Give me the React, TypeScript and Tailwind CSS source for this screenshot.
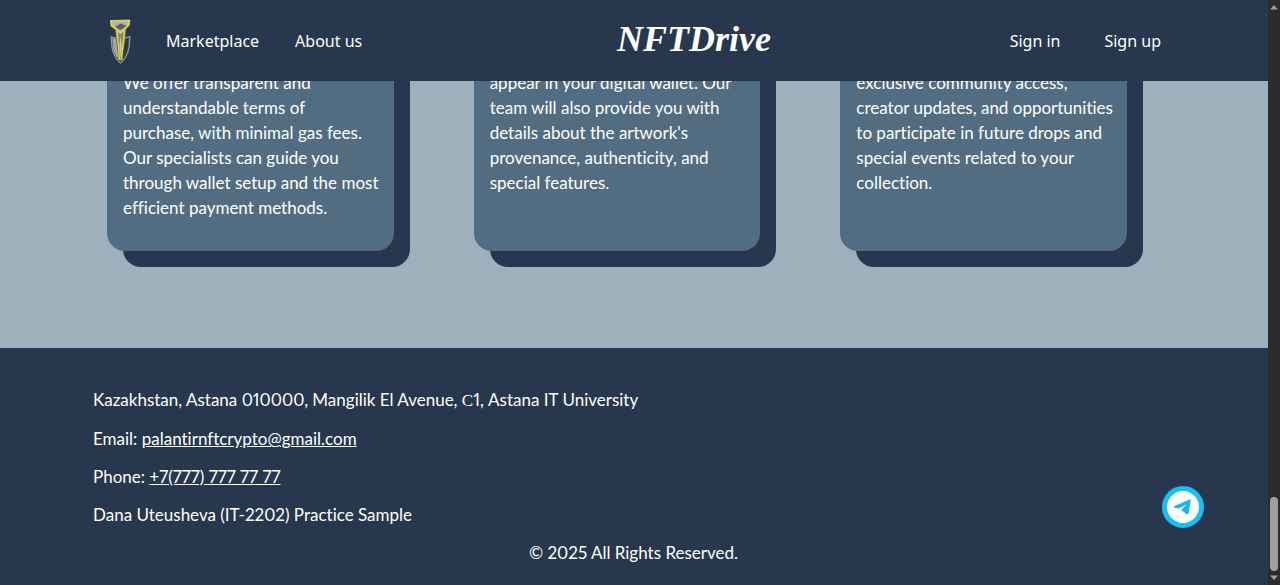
import React from 'react';

const cards = [
  [
    'We offer transparent and',
    'understandable terms of',
    'purchase, with minimal gas fees.',
    'Our specialists can guide you',
    'through wallet setup and the most',
    'efficient payment methods.',
  ],
  [
    'appear in your digital wallet. Our',
    'team will also provide you with',
    "details about the artwork's",
    'provenance, authenticity, and',
    'special features.',
  ],
  [
    'exclusive community access,',
    'creator updates, and opportunities',
    'to participate in future drops and',
    'special events related to your',
    'collection.',
  ],
];

function Emblem() {
  return (
    <svg viewBox="0 0 24 48" className="h-12 w-6" role="img" aria-label="NFTDrive emblem">
      <path d="M3 19.500 L6 20.500 H18 L22 19.500 L21 31 Q19 41 12.500 46.500 Q6 41 4 31 Z" fill="#54585a" stroke="#a2a5a3" strokeWidth="1" />
      <path d="M4.500 21 L8 22 L10.500 42 Q6 37 5 31 Z" fill="#a3a6a4" />
      <path d="M17.500 22 L20.500 21 L20 31 Q18 38 14.500 42 Z" fill="#33383b" />
      <path d="M7 12 H18 L17 24 L12.500 45 L8.500 24 Z" fill="#84877f" />
      <path d="M2.500 3.500 L22 3 L21 8.500 L17 12.500 L12.500 17 L8 12.500 L3 9 Z" fill="#b2b4af" stroke="#c9c67a" strokeWidth="0.900" />
      <path d="M7 10 L12.500 6.500 L19 9 L12.500 13 Z" fill="#5c6060" />
      <path d="M3 4 H21.500 L20 8.500 L12.500 16 L4 8.500 Z" fill="none" stroke="#e4de2a" strokeWidth="1.200" />
      <path d="M9 14 L10.500 28 L11.300 43 M16.500 14 L15 28 L13.500 43" fill="none" stroke="#e4de20" strokeWidth="1.400" />
      <path d="M12.500 19 L14 29 L12.500 42 L11.500 29 Z" fill="#c3c4bd" />
    </svg>
  );
}

function Scrollbar() {
  return (
    <div aria-hidden="true" className="flex w-3 shrink-0 flex-col items-center bg-[#2c2c2c] pt-1 pb-1">
      <svg viewBox="0 0 10 6" className="h-[6px] w-[10px]"><path d="M1 5.500 L5 1 L9 5.500 Z" fill="#9f9f9f" /></svg>
      <div className="flex-1" />
      <div className="mb-1 h-[74px] w-2 rounded-full bg-[#9f9f9f]" />
      <svg viewBox="0 0 10 6" className="h-[6px] w-[10px]"><path d="M1 0.500 L5 5 L9 0.500 Z" fill="#9f9f9f" /></svg>
    </div>
  );
}

export default function App() {
  return (
    <div className="flex h-screen bg-[#9db1bd] font-['Lato','Noto_Sans',sans-serif] text-[17px] text-white [font-variant-ligatures:none]">
      <div className="flex min-w-0 flex-1 flex-col">
        <header className="z-10 flex h-[81px] shrink-0 items-center justify-between bg-[#27374d] pr-[107px] pl-[108px] font-['Noto_Sans',sans-serif] text-base">
          <nav aria-label="Main" className="flex items-center gap-9">
            <div className="flex items-center gap-[34px]">
              <a href="#home"><Emblem /></a>
              <a href="#marketplace">Marketplace</a>
            </div>
            <a href="#about">About us</a>
          </nav>
          <a href="#home" className="pb-1 pl-4 font-['Liberation_Serif',serif] text-[36px] leading-10 font-bold italic">NFTDrive</a>
          <nav aria-label="Account" className="flex items-center gap-11">
            <a href="#signin">Sign in</a>
            <a href="#signup">Sign up</a>
          </nav>
        </header>
        <main className="flex min-h-0 flex-1 flex-col justify-end overflow-hidden pr-[141px] pb-[97px] pl-[107px]">
          <div className="grid grid-cols-3 gap-20">
            {cards.map((lines) => (
              <article key={lines[0]} className="rounded-[18px] bg-[#526d82] px-4 pt-8 pb-[31px] leading-[25px] shadow-[16px_16px_0_#27374d]">
                <p>
                  {lines.map((line) => (
                    <span key={line} className="block whitespace-nowrap">{line}</span>
                  ))}
                </p>
              </article>
            ))}
          </div>
        </main>
        <footer className="flex shrink-0 flex-col gap-3 bg-[#27374d] pt-[39px] pr-[94px] pb-[19px] pl-[93px] leading-[26px] proportional-nums">
          <p>Kazakhstan, Astana 010000, Mangilik El Avenue, <span className="font-['Liberation_Serif',serif]">С</span>1, Astana IT University</p>
          <p>Email: <a href="mailto:palantirnftcrypto@gmail.com" className="underline">palantirnftcrypto@gmail.com</a></p>
          <p>Phone: <a href="tel:+77777777777" className="underline">+7(777) 777 77 77</a></p>
          <p>Dana Uteusheva (IT-2202) Practice Sample</p>
          <p className="text-center">© 2025 All Rights Reserved.</p>
        </footer>
      </div>
      <Scrollbar />
      <a href="#telegram" aria-label="Telegram" className="fixed right-[76px] bottom-[57px] z-20 flex size-[42px] items-center justify-center rounded-full border-[5px] border-[#16bff5] bg-white">
        <svg viewBox="0 0 20 18" className="h-[18px] w-5" aria-hidden="true">
          <path d="M1 8.300 L17.200 1.200 Q18 1 17.800 2 L15.500 15.500 Q15 17.200 13.800 16.300 L8 12 L13.500 6.500 L5.500 10.500 L1.200 9.600 Q0.200 8.900 1 8.300 Z" fill="#18b5ea" />
        </svg>
      </a>
    </div>
  );
}
